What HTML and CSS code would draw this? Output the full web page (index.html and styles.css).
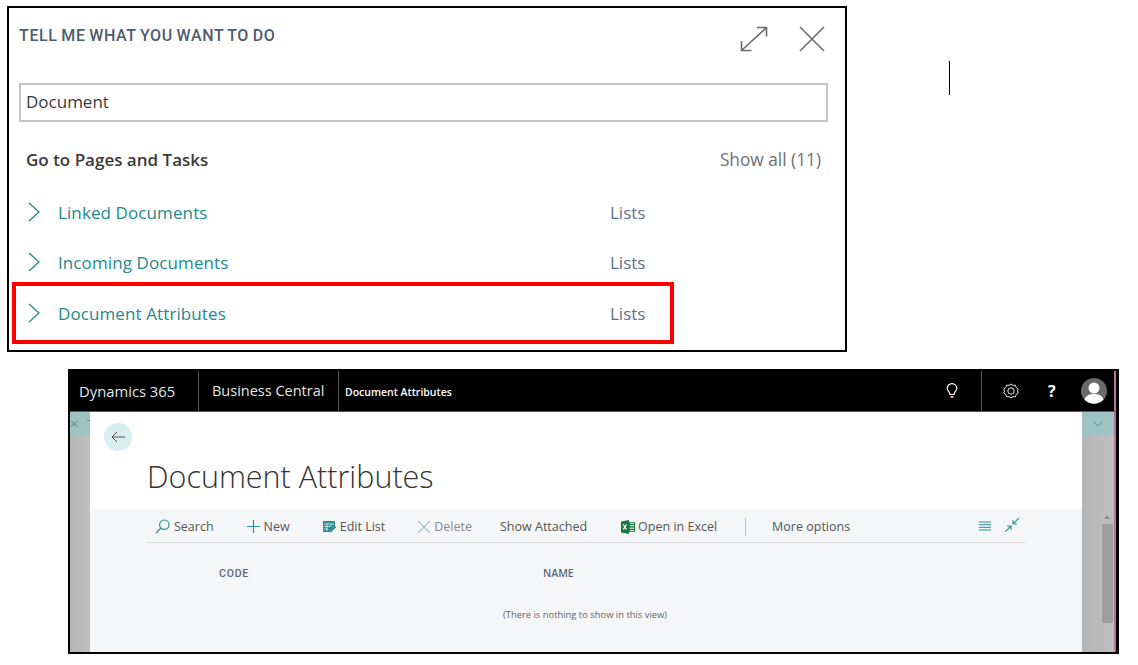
FILE: index.html
```html
<!DOCTYPE html>
<html>
<head>
  <meta charset="UTF-8">
  <title>Document Attributes</title>
  <link rel="stylesheet" href="styles.css">
</head>
<body>

<div class="top">
  <div class="dialog">
    <div class="dialog-head">
      <h2>TELL ME WHAT YOU WANT TO DO</h2>
      <svg class="ico-expand" width="28" height="26" viewBox="0 0 28 26" fill="none" stroke="#6b6b6b" stroke-width="1.6">
        <path d="M1.500 24.500 26.500 1.500M17 1.500h9.500v9M1.500 15v9.500h10"/>
      </svg>
      <svg class="ico-close" width="26" height="26" viewBox="0 0 26 26" fill="none" stroke="#6b6b6b" stroke-width="1.6">
        <path d="M1 1 25 25M25 1 1 25"/>
      </svg>
    </div>
    <div class="search-box">Document</div>
    <div class="section-head">
      <span class="section-title">Go to Pages and Tasks</span>
      <span class="show-all">Show all (11)</span>
    </div>
    <div class="row">
      <svg class="chev" width="12" height="20" viewBox="0 0 12 20" fill="none" stroke="#2f8f92" stroke-width="1.5"><path d="M1 1 11 10 1 19"/></svg>
      <span class="row-name">Linked Documents</span>
      <span class="row-type">Lists</span>
    </div>
    <div class="row">
      <svg class="chev" width="12" height="20" viewBox="0 0 12 20" fill="none" stroke="#2f8f92" stroke-width="1.5"><path d="M1 1 11 10 1 19"/></svg>
      <span class="row-name">Incoming Documents</span>
      <span class="row-type">Lists</span>
    </div>
    <div class="row row-marked">
      <svg class="chev" width="12" height="20" viewBox="0 0 12 20" fill="none" stroke="#2f8f92" stroke-width="1.5"><path d="M1 1 11 10 1 19"/></svg>
      <span class="row-name">Document Attributes</span>
      <span class="row-type">Lists</span>
    </div>
  </div>
  <div class="caret"></div>
</div>

<div class="window">
  <div class="topbar">
    <span class="brand">Dynamics 365</span>
    <span class="product">Business Central</span>
    <span class="crumb">Document Attributes</span>
    <svg class="ico-bulb" width="12" height="16" viewBox="0 0 12 16" fill="none" stroke="#fff" stroke-width="1.2">
      <path d="M4 11.500C4 9 1.200 8.200 1.200 5.200a4.800 4.600 0 0 1 9.600 0C10.800 8.200 8 9 8 11.500Z"/>
      <path d="M4.500 14h3" stroke="#d9a0a0" stroke-width="2"/>
    </svg>
    <div class="bar-tools">
      <svg class="ico-gear" width="16" height="16" viewBox="0 0 16 16" fill="none" stroke="#e6e6e6" stroke-width="1">
        <path d="M8 1l2 1.400 2.400-.2.8 2.300 2 1.400L14.500 8l.7 2.100-2 1.400-.8 2.300-2.400-.2L8 15l-2-1.400-2.400.2-.8-2.300-2-1.400L1.500 8 .8 5.900l2-1.400.8-2.300 2.400.2Z"/>
        <circle cx="8" cy="8" r="3.200"/>
      </svg>
      <span class="help">?</span>
      <svg class="avatar" width="26" height="26" viewBox="0 0 26 26">
        <circle cx="13" cy="13" r="13" fill="#6a6a6a"/>
        <circle cx="13" cy="10" r="5.500" fill="#fff"/>
        <path d="M3.500 21.500C5 17 9 16 13 16s8 1 9.500 5.500A13 13 0 0 1 3.500 21.500Z" fill="#fff"/>
      </svg>
    </div>
  </div>
  <div class="stage">
    <div class="side side-left">
      <div class="side-band"><span class="side-x">×</span><span class="side-tick"></span></div>
    </div>
    <div class="page">
      <div class="page-top">
        <div class="back">
          <svg width="14" height="12" viewBox="0 0 14 12" fill="none" stroke="#555" stroke-width="1"><path d="M14 6H1M6 1 1 6l5 5"/></svg>
        </div>
        <h1>Document Attributes</h1>
      </div>
      <div class="page-body">
        <div class="toolbar">
          <span class="tool tool-search">
            <svg width="15" height="15" viewBox="0 0 15 15" fill="none" stroke="#2f8f92" stroke-width="1.2"><circle cx="9.300" cy="5.700" r="4.700"/><path d="M6 9 1 14"/></svg>
            Search
          </span>
          <span class="tool tool-new">
            <svg width="13" height="13" viewBox="0 0 13 13" fill="none" stroke="#2f8f92" stroke-width="1.200"><path d="M6.500 0v13M0 6.500h13"/></svg>
            New
          </span>
          <span class="tool tool-edit">
            <svg width="13" height="12" viewBox="0 0 13 12" fill="none"><path d="M0 0h12v5L6 11H0Z" fill="#2f8f92"/><path d="M1 3h10M1 5.500h6M1 8h4M4 3v7M8 3v2.500" stroke="#d5e8e9" stroke-width=".8"/><path d="M7 11 12.500 5.500" stroke="#2f8f92" stroke-width="1.800"/></svg>
            Edit List
          </span>
          <span class="tool tool-delete">
            <svg width="12" height="12" viewBox="0 0 12 12" fill="none" stroke="#9fc6c9" stroke-width="1.300"><path d="M0 0 12 12M12 0 0 12"/></svg>
            Delete
          </span>
          <span class="tool tool-attached">Show Attached</span>
          <span class="tool tool-excel">
            <svg width="14" height="14" viewBox="0 0 14 14"><path d="M0 1.500 8 0v14L0 12.500Z" fill="#1e7a45"/><path d="M8 2h6v10H8Z" fill="#1e7a45"/><path d="M9 3.200h4M9 5.700h4M9 8.200h4M9 10.700h4" stroke="#fff" stroke-width="1"/><path d="M2.300 4.500 5.500 9.500M5.500 4.500 2.300 9.500" stroke="#fff" stroke-width="1.200"/></svg>
            Open in Excel
          </span>
          <span class="tool-sep"></span>
          <span class="tool tool-more">More options</span>
          <svg class="ico-list" width="12" height="10" viewBox="0 0 12 10" fill="none" stroke="#2f8f92" stroke-width="1"><path d="M0 1h12M0 3.700h12M0 6.300h12M0 9h12"/></svg>
          <svg class="ico-collapse" width="14" height="14" viewBox="0 0 14 14" fill="none" stroke="#2f8f92" stroke-width="1.100"><path d="M0 14 6 8M2 8h4v4M14 0 8 6M8 2v4h4"/></svg>
        </div>
        <div class="cols">
          <span class="col-code">CODE</span>
          <span class="col-name">NAME</span>
        </div>
        <p class="empty">(There is nothing to show in this view)</p>
      </div>
    </div>
    <div class="side side-right">
      <div class="side-band">
        <svg width="10" height="6" viewBox="0 0 10 6" fill="none" stroke="#6d8f91" stroke-width="1"><path d="M1 1 5 5 9 1"/></svg>
      </div>
      <div class="scroll">
        <div class="scroll-up"></div>
        <div class="scroll-thumb"></div>
      </div>
    </div>
  </div>
</div>

</body>
</html>
```

FILE: styles.css
```css
body {
  margin: 0;
  padding: 6px 0 0 7px;
  background: white;
  font-family: "Open Sans", sans-serif;
  overflow: hidden;
}
.top {
  display: flex;
  align-items: flex-start;
}
.dialog {
  width: 840px;
  height: 346px;
  box-sizing: border-box;
  border: 2px solid black;
  padding: 0 3px;
}
.dialog-head {
  display: flex;
  align-items: center;
  height: 54px;
  padding: 0 17px 0 7px;
}
.dialog-head h2 {
  margin: 0;
  flex: 1;
  font-family: Roboto, sans-serif;
  font-size: 16px;
  font-weight: 500;
  letter-spacing: 0.64px;
  word-spacing: -1px;
  color: #505c6d;
}
.ico-expand {
  margin-right: 31px;
  position: relative;
  top: 4px;
}
.ico-close {
  position: relative;
  top: 4px;
}
.search-box {
  box-sizing: border-box;
  width: 809px;
  height: 39px;
  margin: 21px 0 0 7px;
  padding-left: 5px;
  border: 2px solid #c4c4c4;
  font-size: 17px;
  line-height: 34px;
  color: #3a3a3a;
}
.section-head {
  display: flex;
  justify-content: space-between;
  align-items: center;
  height: 28px;
  margin-top: 23px;
  padding: 0 21px 0 14px;
}
.section-title {
  font-size: 17px;
  font-weight: 600;
  color: #3a3a3a;
}
.show-all {
  font-size: 17.300px;
  color: #6f6f6f;
}
.row {
  display: flex;
  align-items: center;
  box-sizing: border-box;
  width: 662px;
  height: 50px;
  padding-left: 16px;
  font-size: 17px;
}
.row:nth-of-type(4) {
  margin-top: 14px;
}
.row-marked {
  border: 4px solid red;
  height: 62px;
  margin-top: -5px;
  padding-left: 12px;
}
.chev {
  margin-right: 18px;
}
.row-name {
  width: 552px;
  letter-spacing: 0.1px;
  color: #22898c;
}
.row-type {
  color: #667083;
}
.caret {
  width: 1px;
  height: 34px;
  margin: 55px 0 0 102px;
  background: black;
}
.window {
  box-sizing: border-box;
  width: 1051px;
  height: 285px;
  margin: 17px 0 0 61px;
  border: 2px solid black;
  border-right-width: 3px;
  display: flex;
  flex-direction: column;
}
.topbar {
  display: flex;
  align-items: center;
  flex: none;
  height: 40px;
  background: black;
  color: white;
  border-bottom: 1px solid #555;
  border-right: 2px solid #b66fa8;
}
.brand {
  box-sizing: border-box;
  width: 129px;
  padding-left: 9px;
  font-size: 14.800px;
  line-height: 40px;
  border-right: 1px solid #555;
  color: #dfe8ee;
}
.product {
  box-sizing: border-box;
  width: 140px;
  padding-left: 13px;
  font-size: 14.500px;
  line-height: 40px;
  border-right: 1px solid #555;
  color: #e6e6e6;
}
.crumb {
  flex: 1;
  padding: 2px 0 0 6px;
  font-size: 10.500px;
  font-weight: 600;
}
.bar-tools {
  display: flex;
  align-items: center;
  height: 40px;
  margin-left: 23px;
  padding-left: 21px;
  border-left: 1px solid #555;
}
.ico-gear {
  margin-right: 29px;
}
.help {
  width: 10px;
  margin-right: 23px;
  font-size: 16px;
  font-weight: 700;
}
.avatar {
  margin-right: 7px;
}
.stage {
  flex: 1;
  display: flex;
  min-height: 0;
}
.side {
  flex: none;
  background: linear-gradient(to right, #b5b5b5, #bfbfbf);
  position: relative;
}
.side-left {
  width: 20px;
}
.side-right {
  width: 32px;
  border-right: 2px solid #b66fa8;
}
.side-band {
  height: 23px;
  background: #9dc3c5;
  display: flex;
  align-items: center;
  justify-content: center;
  overflow: hidden;
  position: relative;
}
.side-left .side-band {
  justify-content: flex-start;
}
.side-x {
  font-size: 14px;
  color: #6d8f91;
}
.side-tick {
  position: absolute;
  top: 8px;
  right: 0;
  width: 3px;
  height: 1px;
  background: #6d8f91;
}
.scroll {
  position: absolute;
  top: 98px;
  right: 0;
  width: 13px;
  background: #bdbdbd;
}
.scroll-up {
  height: 14px;
  position: relative;
}
.scroll-up::after {
  content: "";
  position: absolute;
  top: 5px;
  left: 3px;
  border: 3.500px solid transparent;
  border-top: 0;
  border-bottom: 4px solid #8f8f8f;
}
.scroll-thumb {
  height: 99px;
  width: 11px;
  margin-left: 1px;
  background: #9e9e9e;
}
.page {
  flex: 1;
  min-width: 0;
  display: flex;
  flex-direction: column;
}
.page-top {
  height: 97px;
  box-sizing: border-box;
  background: white;
  padding: 0 0 0 14px;
}
.back {
  width: 28px;
  height: 28px;
  margin-top: 11px;
  border-radius: 50%;
  background: #d9eef0;
  display: flex;
  align-items: center;
  justify-content: center;
}
.page-top h1 {
  margin: 4px 0 0 43px;
  font-size: 30.500px;
  font-weight: 300;
  line-height: 42px;
  color: #333;
}
.page-body {
  flex: 1;
  background: #f5f6f8;
  padding: 0 56px;
}
.toolbar {
  display: flex;
  align-items: center;
  box-sizing: border-box;
  height: 34px;
  padding-top: 2px;
  border-bottom: 1px solid #dcdddf;
  font-size: 12.500px;
  color: #555;
}
.tool {
  display: flex;
  align-items: center;
  gap: 4px;
  white-space: nowrap;
}
.tool-search { margin-left: 9px; }
.tool-new { margin-left: 33px; }
.tool-edit { margin-left: 33px; }
.tool-delete { margin-left: 33px; color: #8a8a8a; }
.tool-attached { margin-left: 28px; }
.tool-excel { margin-left: 34px; gap: 3px; }
.tool-sep {
  width: 1px;
  height: 19px;
  margin-left: 28px;
  background: #c8c8c8;
}
.tool-more { margin-left: 26px; flex: 1; }
.ico-list { margin-right: 14px; position: relative; top: -1px; }
.ico-collapse { margin-right: 7px; position: relative; top: -2px; }
.cols {
  display: grid;
  grid-template-columns: 324px 1fr;
  height: 30px;
  margin-top: 23px;
  padding-left: 73px;
  font-size: 10.500px;
  line-height: 14px;
  font-weight: 600;
  color: #5f6673;
}
.col-code {
  margin-top: 1px;
  font-family: Roboto, sans-serif;
  font-weight: 500;
  letter-spacing: 0.8px;
}
.empty {
  margin: 0;
  padding: 12px 0 0 357px;
  font-size: 9.400px;
  color: #666;
}
```
